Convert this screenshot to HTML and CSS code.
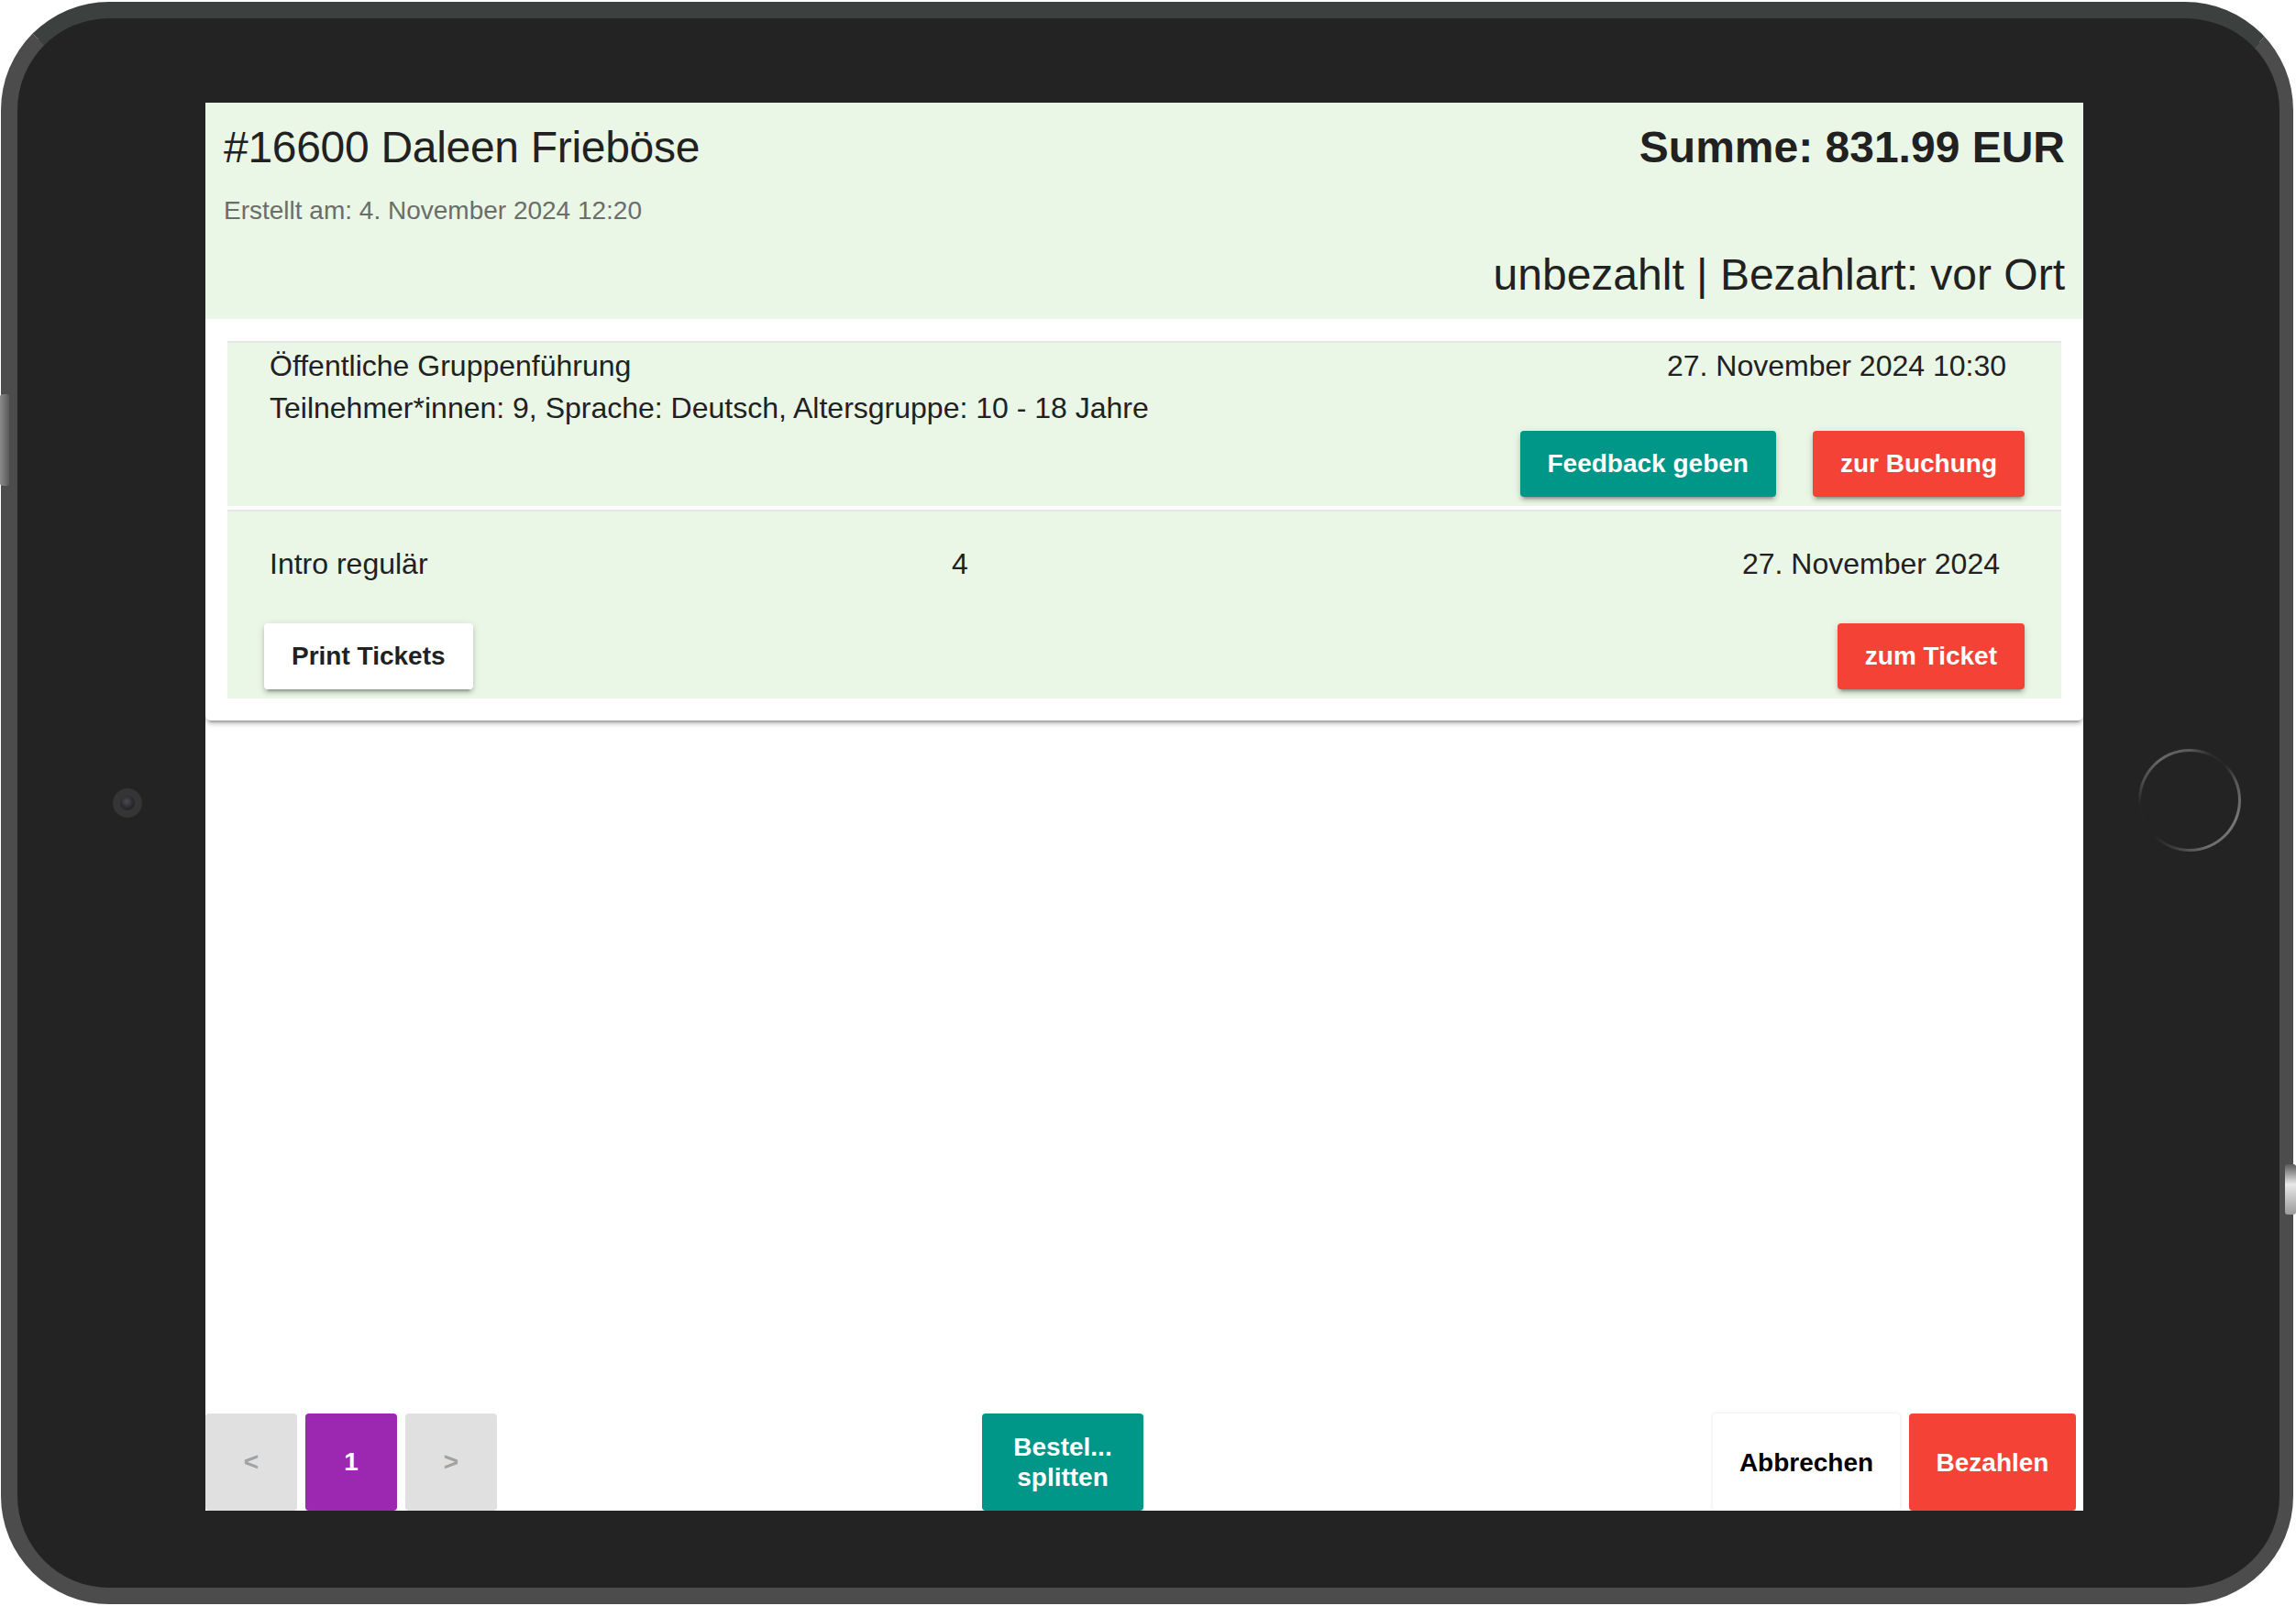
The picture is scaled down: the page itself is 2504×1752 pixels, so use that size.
FILE: index.html
```html
<!DOCTYPE html>
<html lang="de">
<head>
    <meta charset="UTF-8">
    <meta name="viewport" content="width=device-width, initial-scale=1.0">
    <title>Bestellung #16600</title>
    <link rel="stylesheet" href="styles.css">
</head>
<body>
    <div class="device">
        <div class="side-key side-key-left"></div>
        <div class="side-key side-key-right"></div>
        <div class="camera"><div class="camera-lens"></div></div>
        <div class="home-button"></div>

        <div class="screen">
            <div class="order-card">
                <div class="order-head">
                    <div class="head-row">
                        <h1 class="order-title">#16600 Daleen Frieböse</h1>
                        <div class="order-sum">Summe: 831.99 EUR</div>
                    </div>
                    <div class="order-created">Erstellt am: 4. November 2024 12:20</div>
                    <div class="order-status">unbezahlt | Bezahlart: vor Ort</div>
                </div>

                <div class="order-items">
                    <div class="item">
                        <div class="item-row">
                            <span>Öffentliche Gruppenführung</span>
                            <span>27. November 2024 10:30</span>
                        </div>
                        <div class="item-row">
                            <span>Teilnehmer*innen: 9, Sprache: Deutsch, Altersgruppe: 10 - 18 Jahre</span>
                        </div>
                        <div class="item-actions">
                            <button class="btn btn-teal">Feedback geben</button>
                            <button class="btn btn-red">zur Buchung</button>
                        </div>
                    </div>

                    <div class="item item-ticket">
                        <div class="ticket-row">
                            <span>Intro regulär</span>
                            <span>4</span>
                            <span>27. November 2024</span>
                        </div>
                        <div class="item-actions ticket-actions">
                            <button class="btn btn-white">Print Tickets</button>
                            <button class="btn btn-red">zum Ticket</button>
                        </div>
                    </div>
                </div>
            </div>

            <div class="action-bar">
                <div class="pager">
                    <button class="page-btn">&lt;</button>
                    <button class="page-btn current">1</button>
                    <button class="page-btn">&gt;</button>
                </div>
                <button class="bar-btn split-btn">Bestel...<br>splitten</button>
                <div class="bar-actions">
                    <button class="bar-btn cancel-btn">Abbrechen</button>
                    <button class="bar-btn pay-btn">Bezahlen</button>
                </div>
            </div>
        </div>
    </div>
</body>
</html>
```

FILE: styles.css
```css
* {
    box-sizing: border-box;
}

body {
    margin: 0;
    padding: 2px 0 0 1px;
    width: 2504px;
    height: 1752px;
    overflow: hidden;
    background-color: #fff;
    font-family: "Liberation Sans", Arial, sans-serif;
}

button {
    font-family: inherit;
    border: none;
    margin: 0;
    cursor: pointer;
}

/* Tablet frame */
.device {
    position: relative;
    width: 2500px;
    height: 1748px;
    border: 18px solid #4c4c4c;
    border-top-color: #3c4140;
    border-right-width: 15px;
    border-radius: 118px;
    background-color: #232323;
    padding: 92px 0 0 205px;
}

.side-key {
    position: absolute;
    border-radius: 3px;
}

.side-key-left {
    left: -19px;
    top: 410px;
    width: 10px;
    height: 100px;
    background: linear-gradient(90deg, #8a8a8a, #5a5a5a);
}

.side-key-right {
    right: -18px;
    top: 1250px;
    width: 12px;
    height: 55px;
    background: linear-gradient(180deg, #5a5a5a, #e8e8e8 40%, #9a9a9a);
}

.camera {
    position: absolute;
    left: 104px;
    top: 840px;
    width: 32px;
    height: 32px;
    border-radius: 50%;
    background-color: #353535;
    display: flex;
    align-items: center;
    justify-content: center;
}

.camera-lens {
    width: 16px;
    height: 16px;
    border-radius: 50%;
    background: radial-gradient(circle at 45% 40%, #4a4a52 0, #26262b 60%);
}

.home-button {
    position: absolute;
    left: 2313px;
    top: 797px;
    width: 112px;
    height: 112px;
    border-radius: 50%;
    border: 3px solid transparent;
    background:
        linear-gradient(#232323, #232323) padding-box,
        conic-gradient(#5a5a5a 0deg, #2c2c2c 25deg, #262626 45deg, #5a5a5a 70deg, #777 110deg,
            #6e6e6e 160deg, #3a3a3a 200deg, #242424 225deg, #242424 265deg, #4a4a4a 290deg,
            #686868 325deg, #5a5a5a 360deg) border-box;
}

/* Screen */
.screen {
    width: 2048px;
    height: 1536px;
    background-color: #fff;
    display: flex;
    flex-direction: column;
    overflow: hidden;
    color: #212121;
}

.order-card {
    background-color: #fff;
    border-radius: 0 0 6px 6px;
    box-shadow: 0 6px 2px -4px rgba(0, 0, 0, 0.2), 0 4px 4px 0 rgba(0, 0, 0, 0.14), 0 2px 10px 0 rgba(0, 0, 0, 0.12);
}

.order-head {
    background-color: #eaf6e6;
    padding: 19px 20px 18px;
}

.head-row {
    display: flex;
    justify-content: space-between;
    align-items: center;
    height: 60px;
}

.order-title {
    margin: 0;
    font-size: 48px;
    font-weight: normal;
    line-height: 60px;
    letter-spacing: -0.3px;
}

.order-sum {
    font-size: 48px;
    font-weight: bold;
    line-height: 60px;
}

.order-created {
    margin-top: 19px;
    font-size: 28px;
    line-height: 40px;
    color: #6a6e69;
}

.order-status {
    margin-top: 20px;
    font-size: 48px;
    line-height: 60px;
    text-align: right;
}

.order-items {
    padding: 24px;
}

.item {
    background-color: #eaf6e6;
    border-top: 2px solid #e2e7e7;
    padding: 2px 40px 10px;
    font-size: 32px;
}

.item + .item {
    margin-top: 4px;
}

.item-row {
    display: flex;
    justify-content: space-between;
    line-height: 46px;
    padding: 0 20px 0 6px;
}

.item-actions {
    display: flex;
    justify-content: flex-end;
    gap: 40px;
    margin-top: 2px;
}

.item-ticket {
    padding-top: 34px;
}

.ticket-row {
    display: grid;
    grid-template-columns: 744px 1fr auto;
    line-height: 46px;
    padding: 0 27px 0 6px;
}

.ticket-actions {
    justify-content: space-between;
    margin-top: 42px;
}

.btn {
    height: 72px;
    padding: 0 30px;
    border-radius: 4px;
    font-size: 28px;
    font-weight: bold;
    color: #fff;
    box-shadow: 0 6px 2px -4px rgba(0, 0, 0, 0.2), 0 4px 4px 0 rgba(0, 0, 0, 0.14), 0 2px 10px 0 rgba(0, 0, 0, 0.12);
}

.btn-teal {
    background-color: #009688;
}

.btn-red {
    background-color: #f44336;
}

.btn-white {
    background-color: #fff;
    color: #212121;
}

/* Bottom bar */
.action-bar {
    margin-top: auto;
    display: flex;
    height: 106px;
    padding-right: 8px;
}

.pager {
    display: flex;
    gap: 9px;
}

.page-btn {
    width: 100px;
    border-radius: 4px;
    background-color: #e0e0e0;
    color: #a2a2a2;
    font-size: 28px;
    font-weight: bold;
}

.page-btn.current {
    background-color: #9c27b0;
    color: #fff;
}

.bar-btn {
    border-radius: 4px;
    font-size: 28px;
    font-weight: bold;
    line-height: 33px;
    color: #fff;
}

.split-btn {
    width: 176px;
    margin-left: 529px;
    background-color: #009688;
}

.bar-actions {
    margin-left: auto;
    display: flex;
    gap: 10px;
}

.cancel-btn {
    width: 204px;
    background-color: #fff;
    color: #000;
    box-shadow: 0 0 4px rgba(0, 0, 0, 0.12);
}

.pay-btn {
    width: 182px;
    background-color: #f44336;
}
```
